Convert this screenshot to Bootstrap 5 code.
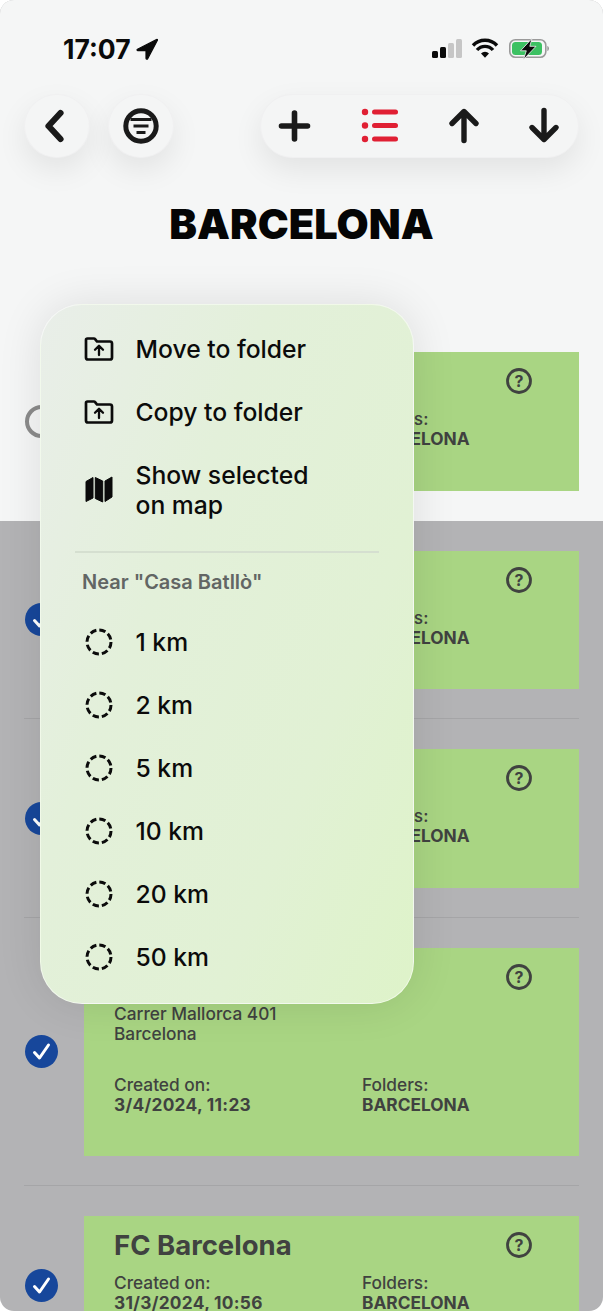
<!DOCTYPE html>
<html lang="en">
<head>
  <meta charset="UTF-8" />
  <meta name="viewport" content="width=device-width, initial-scale=1.0"/>
  <title>Barcelona</title>
  <link href="https://cdn.jsdelivr.net/npm/bootstrap@5.3.0/dist/css/bootstrap.min.css" rel="stylesheet" />
  <style>
    html, body { margin: 0; height: 100%; background: #fff; overflow: hidden; }
    body { font-family: Inter, "Liberation Sans", sans-serif; }
    .app-frame { width: 603px; height: 1311px; overflow: hidden; border-radius: 14px; background: #b3b3b5; }

    /* header */
    .top-area { height: 322px; background: #f5f6f6; }
    .status-bar { height: 94px; padding: 38px 54px 0 63px; }
    .clock { font-size: 26.5px; font-weight: 700; line-height: 22px; color: #0a0a0a; margin-right: 5px; }
    .tool-row { padding: 0 24px; height: 64px; }
    .round-btn { width: 66px; height: 64px; border-radius: 50%; background: #f4f5f5; border: 1.5px solid #f0f0f1; box-shadow: 0 12px 30px rgba(0,0,0,.08); }
    .round-btn + .round-btn { margin-left: 18px; }
    .pill-bar { width: 319px; height: 64px; border-radius: 32px; background: #f4f5f5; border: 1.5px solid #f0f0f1; box-shadow: 0 12px 30px rgba(0,0,0,.08); }
    .pill-slot { position: absolute; top: 0; left: 0; }
    .page-title { margin: 41px 0 0; font-size: 41.5px; line-height: 50px; font-weight: 900; color: #050505; text-align: center; }

    /* list */
    .place-row { padding: 0 24px; }
    .place-row.is-idle { background: #f5f6f6; }
    .place-inner { padding: 30px 0 29px; border-bottom: 1px solid #a5a5a7; }
    .is-idle .place-inner { border-bottom-color: #f5f6f6; }
    .tick { width: 33px; height: 33px; margin-left: 1px; margin-right: 26px; flex: none; }
    .place-card { width: 495px; min-height: 138.6px; background: #a9d583; padding: 12px 46px 41px 30px; color: #404240; }
    .place-title { font-size: 27.5px; line-height: 34px; font-weight: 700; margin: 0; min-height: 34px; }
    .place-addr { font-size: 17.3px; line-height: 20px; margin-top: 10px; margin-bottom: 20px; font-weight: 500; }
    .place-meta { font-size: 17.3px; line-height: 20px; margin-top: 11px; font-weight: 500; }
    .meta-left { width: 248px; flex: none; }
    .meta-value { font-weight: 700; }
    .meta-date { letter-spacing: .3px; }

    /* context menu */
    .ctx-menu { left: 40px; top: 304px; width: 374px; padding: 12px 0 15px; border-radius: 42px;
      background: linear-gradient(112deg, #e9eee9 0%, #e3f0da 35%, #e1f1d4 70%, #def3c9 100%);
      border: 1.5px solid rgba(255,255,255,.55); box-shadow: 0 0 44px rgba(0,0,0,.1); }
    .ctx-item { height: 63px; padding-left: 42.5px; font-size: 24.7px; line-height: 30px; font-weight: 500; color: #0b0b0b; }
    .ctx-item.tall { height: 93px; }
    .ctx-icon { width: 30px; margin-right: 22px; flex: none; text-align: center; line-height: 0; }
    .ctx-line { margin: 15px 34px 0 34px; height: 2px; background: #d5dfd0; }
    .ctx-head { padding-left: 41px; height: 57px; font-size: 20px; font-weight: 600; color: #626664; padding-top: 14px; line-height: 30px; }
  </style>
</head>
<body>
  <div class="app-frame position-relative">

    <div class="top-area">
      <!-- status bar -->
      <div class="status-bar d-flex justify-content-between align-items-start">
        <div class="d-flex align-items-center">
          <span class="clock">17:07</span>
          <svg width="22" height="22" viewBox="0 0 22 22"><path d="M20.500 1.500 1.500 11.200c-.8.500-.5 1.400.4 1.400h7.600c.3 0 .5.200.5.500v7.100c0 1 1.200 1.300 1.700.4l9.700-18.300c.4-.7-.2-1-.9-.8z" fill="#0a0a0a" stroke="#0a0a0a" stroke-width="1.200" stroke-linejoin="round"/></svg>
        </div>
        <svg width="118" height="22" viewBox="0 0 118 22">
          <rect x="1" y="13" width="6" height="7" rx="1.500" fill="#0a0a0a"/>
          <rect x="9" y="9" width="6" height="11" rx="1.500" fill="#0a0a0a"/>
          <rect x="17" y="5" width="6" height="15" rx="1.500" fill="#c6c6c6"/>
          <rect x="25" y="1" width="6" height="19" rx="1.500" fill="#c6c6c6"/>
          <g fill="none" stroke="#0a0a0a" stroke-width="3.400">
            <path d="M42 7.500a16.500 16.500 0 0 1 24 0"/>
            <path d="M46 12a10.600 10.600 0 0 1 16 0"/>
          </g>
          <path d="M50 15.600a5.400 5.400 0 0 1 8 0L54 19.800z" fill="#0a0a0a"/>
          <rect x="78.800" y="1.800" width="36" height="17.400" rx="5.500" fill="none" stroke="#9a9a9a" stroke-width="1.600"/>
          <rect x="81" y="4" width="30" height="13" rx="3.500" fill="#3cc162"/>
          <path d="M116.300 8v5c1.200-.3 1.700-1.300 1.700-2.500s-.5-2.200-1.700-2.500z" fill="#9a9a9a"/>
          <path d="M101 .5 89.500 12.800h5.800L92.500 21.500 105 8.300h-6.200z" fill="#0a0a0a" stroke="#f5f6f6" stroke-width=".8"/>
        </svg>
      </div>

      <!-- toolbar -->
      <div class="tool-row d-flex justify-content-between">
        <div class="d-flex">
          <div class="round-btn d-flex align-items-center justify-content-center">
            <svg width="30" height="36" viewBox="0 0 30 36"><path d="M18.500 5 6.500 18l12 13" fill="none" stroke="#1a1a1a" stroke-width="6.200" stroke-linecap="round" stroke-linejoin="round"/></svg>
          </div>
          <div class="round-btn d-flex align-items-center justify-content-center">
            <svg width="38" height="38" viewBox="0 0 38 38">
              <circle cx="19" cy="19" r="15.200" fill="none" stroke="#1a1a1a" stroke-width="5"/>
              <path d="M8.500 12.500h21M11.500 19h15M14.500 25.500h9" fill="none" stroke="#1a1a1a" stroke-width="3"/>
            </svg>
          </div>
        </div>
        <div class="pill-bar position-relative">
          <svg class="pill-slot" width="319" height="64" viewBox="1 1.500 319 64">
            <path d="M34.500 19.500v26M21.500 32.500h26" fill="none" stroke="#1a1a1a" stroke-width="5.600" stroke-linecap="round"/>
            <g fill="#e01f33">
              <circle cx="105" cy="18.500" r="3.200"/><circle cx="105" cy="32" r="3.200"/><circle cx="105" cy="45.500" r="3.200"/>
              <rect x="112" y="16" width="26" height="5" rx="2.500"/><rect x="112" y="29.500" width="26" height="5" rx="2.500"/><rect x="112" y="43" width="26" height="5" rx="2.500"/>
            </g>
            <path d="M204 47V19M192 30l12-12 12 12" fill="none" stroke="#1a1a1a" stroke-width="5.400" stroke-linecap="round" stroke-linejoin="round"/>
            <path d="M284 17v28M272 34l12 12 12-12" fill="none" stroke="#1a1a1a" stroke-width="5.400" stroke-linecap="round" stroke-linejoin="round"/>
          </svg>
        </div>
      </div>

      <h1 class="page-title">BARCELONA</h1>
    </div>

    <!-- places -->
    <div class="place-row is-idle">
      <div class="place-inner d-flex align-items-center">
        <svg class="tick" viewBox="0 0 33 33"><circle cx="16.500" cy="16.500" r="14.500" fill="none" stroke="#8b8b8b" stroke-width="4"/></svg>
        <div class="place-card d-flex flex-column">
          <div class="d-flex justify-content-between align-items-center">
            <div class="place-title"></div>
            <svg width="28" height="28" viewBox="0 0 28 28"><circle cx="14" cy="14" r="11.500" fill="none" stroke="#404240" stroke-width="2.800"/><text x="14" y="19.500" text-anchor="middle" font-size="16" font-weight="700" fill="#404240" font-family="Inter, sans-serif">?</text></svg>
          </div>
          <div class="place-meta d-flex"><div class="meta-left">Created on:</div><div>Folders:<div class="meta-value">BARCELONA</div></div></div>
        </div>
      </div>
    </div>

    <div class="place-row">
      <div class="place-inner d-flex align-items-center">
        <svg class="tick" viewBox="0 0 33 33"><circle cx="16.500" cy="16.500" r="16.500" fill="#17479b"/><path d="M9.500 17.500l5 5.500 9-13" fill="none" stroke="#fff" stroke-width="3" stroke-linecap="round" stroke-linejoin="round"/></svg>
        <div class="place-card d-flex flex-column">
          <div class="d-flex justify-content-between align-items-center">
            <div class="place-title"></div>
            <svg width="28" height="28" viewBox="0 0 28 28"><circle cx="14" cy="14" r="11.500" fill="none" stroke="#404240" stroke-width="2.800"/><text x="14" y="19.500" text-anchor="middle" font-size="16" font-weight="700" fill="#404240" font-family="Inter, sans-serif">?</text></svg>
          </div>
          <div class="place-meta d-flex"><div class="meta-left">Created on:</div><div>Folders:<div class="meta-value">BARCELONA</div></div></div>
        </div>
      </div>
    </div>

    <div class="place-row">
      <div class="place-inner d-flex align-items-center">
        <svg class="tick" viewBox="0 0 33 33"><circle cx="16.500" cy="16.500" r="16.500" fill="#17479b"/><path d="M9.500 17.500l5 5.500 9-13" fill="none" stroke="#fff" stroke-width="3" stroke-linecap="round" stroke-linejoin="round"/></svg>
        <div class="place-card d-flex flex-column">
          <div class="d-flex justify-content-between align-items-center">
            <div class="place-title"></div>
            <svg width="28" height="28" viewBox="0 0 28 28"><circle cx="14" cy="14" r="11.500" fill="none" stroke="#404240" stroke-width="2.800"/><text x="14" y="19.500" text-anchor="middle" font-size="16" font-weight="700" fill="#404240" font-family="Inter, sans-serif">?</text></svg>
          </div>
          <div class="place-meta d-flex"><div class="meta-left">Created on:</div><div>Folders:<div class="meta-value">BARCELONA</div></div></div>
        </div>
      </div>
    </div>

    <div class="place-row">
      <div class="place-inner d-flex align-items-center">
        <svg class="tick" viewBox="0 0 33 33"><circle cx="16.500" cy="16.500" r="16.500" fill="#17479b"/><path d="M9.500 17.500l5 5.500 9-13" fill="none" stroke="#fff" stroke-width="3" stroke-linecap="round" stroke-linejoin="round"/></svg>
        <div class="place-card d-flex flex-column">
          <div class="d-flex justify-content-between align-items-center">
            <div class="place-title"></div>
            <svg width="28" height="28" viewBox="0 0 28 28"><circle cx="14" cy="14" r="11.500" fill="none" stroke="#404240" stroke-width="2.800"/><text x="14" y="19.500" text-anchor="middle" font-size="16" font-weight="700" fill="#404240" font-family="Inter, sans-serif">?</text></svg>
          </div>
          <div class="place-addr">Carrer Mallorca 401<br>Barcelona</div>
          <div class="place-meta d-flex"><div class="meta-left">Created on:<div class="meta-value meta-date">3/4/2024, 11:23</div></div><div>Folders:<div class="meta-value">BARCELONA</div></div></div>
        </div>
      </div>
    </div>

    <div class="place-row">
      <div class="place-inner d-flex align-items-center">
        <svg class="tick" viewBox="0 0 33 33"><circle cx="16.500" cy="16.500" r="16.500" fill="#17479b"/><path d="M9.500 17.500l5 5.500 9-13" fill="none" stroke="#fff" stroke-width="3" stroke-linecap="round" stroke-linejoin="round"/></svg>
        <div class="place-card d-flex flex-column">
          <div class="d-flex justify-content-between align-items-center">
            <div class="place-title">FC Barcelona</div>
            <svg width="28" height="28" viewBox="0 0 28 28"><circle cx="14" cy="14" r="11.500" fill="none" stroke="#404240" stroke-width="2.800"/><text x="14" y="19.500" text-anchor="middle" font-size="16" font-weight="700" fill="#404240" font-family="Inter, sans-serif">?</text></svg>
          </div>
          <div class="place-meta d-flex"><div class="meta-left">Created on:<div class="meta-value meta-date">31/3/2024, 10:56</div></div><div>Folders:<div class="meta-value">BARCELONA</div></div></div>
        </div>
      </div>
    </div>

    <!-- context menu -->
    <div class="ctx-menu position-absolute">
      <div class="ctx-item d-flex align-items-center">
        <span class="ctx-icon"><svg width="30" height="24" viewBox="0 0 30 24"><path d="M2 6V3c0-1 .7-1.500 1.500-1.500h6.300c.7 0 1.100.3 1.500.8l1.700 2.200h13c1.200 0 2 .8 2 2v14c0 1.200-.8 2-2 2H4c-1.200 0-2-.8-2-2z" fill="none" stroke="#0b0b0b" stroke-width="2.700" stroke-linejoin="round"/><path d="M15 18V9M11 12.800l4-4 4 4" fill="none" stroke="#0b0b0b" stroke-width="2.300" stroke-linecap="round" stroke-linejoin="round"/></svg></span>
        Move to folder
      </div>
      <div class="ctx-item d-flex align-items-center">
        <span class="ctx-icon"><svg width="30" height="24" viewBox="0 0 30 24"><path d="M2 6V3c0-1 .7-1.500 1.500-1.500h6.300c.7 0 1.100.3 1.500.8l1.700 2.200h13c1.200 0 2 .8 2 2v14c0 1.200-.8 2-2 2H4c-1.200 0-2-.8-2-2z" fill="none" stroke="#0b0b0b" stroke-width="2.700" stroke-linejoin="round"/><path d="M15 18V9M11 12.800l4-4 4 4" fill="none" stroke="#0b0b0b" stroke-width="2.300" stroke-linecap="round" stroke-linejoin="round"/></svg></span>
        Copy to folder
      </div>
      <div class="ctx-item tall d-flex align-items-center">
        <span class="ctx-icon"><svg width="28" height="27" viewBox="0 0 28 27"><path d="M1 5.500 8 1.500V22l-7 3.500zM10.300 1.500 17.700 5v21l-7.400-3.500zM20 5l7-4v20l-7 4.500z" fill="#0b0b0b" stroke="#0b0b0b" stroke-width="1" stroke-linejoin="round"/></svg></span>
        <span>Show selected<br>on map</span>
      </div>
      <div class="ctx-line"></div>
      <div class="ctx-head">Near "Casa Batllò"</div>
      <div class="ctx-item d-flex align-items-center"><span class="ctx-icon"><svg width="28" height="28" viewBox="0 0 28 28"><circle cx="14" cy="14" r="12" fill="none" stroke="#0b0b0b" stroke-width="3" stroke-dasharray="6.400 3.020"/></svg></span>1 km</div>
      <div class="ctx-item d-flex align-items-center"><span class="ctx-icon"><svg width="28" height="28" viewBox="0 0 28 28"><circle cx="14" cy="14" r="12" fill="none" stroke="#0b0b0b" stroke-width="3" stroke-dasharray="6.400 3.020"/></svg></span>2 km</div>
      <div class="ctx-item d-flex align-items-center"><span class="ctx-icon"><svg width="28" height="28" viewBox="0 0 28 28"><circle cx="14" cy="14" r="12" fill="none" stroke="#0b0b0b" stroke-width="3" stroke-dasharray="6.400 3.020"/></svg></span>5 km</div>
      <div class="ctx-item d-flex align-items-center"><span class="ctx-icon"><svg width="28" height="28" viewBox="0 0 28 28"><circle cx="14" cy="14" r="12" fill="none" stroke="#0b0b0b" stroke-width="3" stroke-dasharray="6.400 3.020"/></svg></span>10 km</div>
      <div class="ctx-item d-flex align-items-center"><span class="ctx-icon"><svg width="28" height="28" viewBox="0 0 28 28"><circle cx="14" cy="14" r="12" fill="none" stroke="#0b0b0b" stroke-width="3" stroke-dasharray="6.400 3.020"/></svg></span>20 km</div>
      <div class="ctx-item d-flex align-items-center"><span class="ctx-icon"><svg width="28" height="28" viewBox="0 0 28 28"><circle cx="14" cy="14" r="12" fill="none" stroke="#0b0b0b" stroke-width="3" stroke-dasharray="6.400 3.020"/></svg></span>50 km</div>
    </div>
  </div>

  <script src="https://cdn.jsdelivr.net/npm/bootstrap@5.3.0/dist/js/bootstrap.bundle.min.js"></script>
</body>
</html>
